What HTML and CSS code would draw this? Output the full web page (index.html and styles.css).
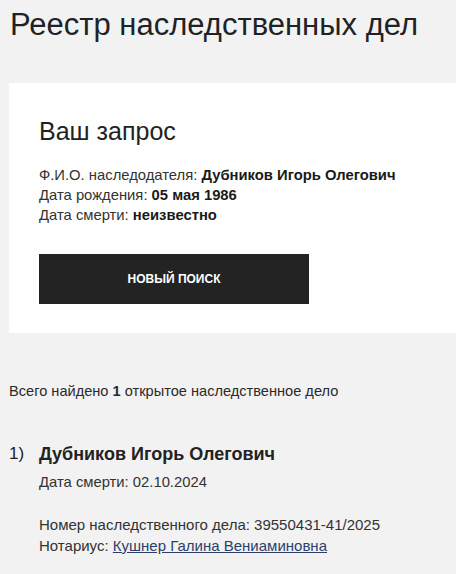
FILE: index.html
```html
<!DOCTYPE html>
<html lang="ru">
<head>
    <meta charset="UTF-8">
    <meta name="viewport" content="width=device-width, initial-scale=1.0">
    <title>Реестр наследственных дел</title>
    <link rel="stylesheet" href="styles.css">
</head>
<body>
    <div class="page">
        <h1 class="page-title">Реестр наследственных дел</h1>

        <!-- Карточка запроса -->
        <div class="request-card">
            <h2 class="request-title">Ваш запрос</h2>
            <div class="request-info">
                <div>Ф.И.О. наследодателя: <b>Дубников Игорь Олегович</b></div>
                <div>Дата рождения: <b>05 мая 1986</b></div>
                <div>Дата смерти: <b>неизвестно</b></div>
            </div>
            <a class="search-btn" href="#">Новый поиск</a>
        </div>

        <p class="found-text">Всего найдено <b>1</b> открытое наследственное дело</p>

        <!-- Список дел -->
        <div class="case-item">
            <div class="case-num">1)</div>
            <div class="case-body">
                <div class="case-name">Дубников Игорь Олегович</div>
                <div class="case-date">Дата смерти: 02.10.2024</div>
                <div class="case-details">
                    <div>Номер наследственного дела: 39550431-41/2025</div>
                    <div>Нотариус: <a class="notary-link" href="#">Кушнер Галина Вениаминовна</a></div>
                </div>
            </div>
        </div>
    </div>
</body>
</html>
```

FILE: styles.css
```css
body {
    font-family: 'Liberation Sans', Arial, sans-serif;
    margin: 0;
    padding: 0;
    background: #f2f2f2;
    color: #222;
    overflow: hidden;
}

.page {
    padding: 0 0 0 9px;
}

.page-title {
    font-size: 31px;
    font-weight: normal;
    margin: 0;
    padding: 6px 0 0 1px;
    line-height: 37px;
    color: #1f2226;
}

/* Карточка запроса */
.request-card {
    background: #fff;
    margin-top: 40px;
    padding: 33px 30px 30px;
    height: 187px;
}

.request-title {
    font-size: 25px;
    font-weight: normal;
    margin: 0 0 19px;
    line-height: 30px;
}

.request-info {
    font-size: 14.8px;
    line-height: 20px;
    color: #333;
}

.request-info b {
    color: #1a1a1a;
}

.search-btn {
    display: flex;
    justify-content: center;
    align-items: center;
    width: 270px;
    height: 50px;
    margin-top: 29px;
    background: #232323;
    color: #fff;
    font-size: 12px;
    font-weight: bold;
    text-transform: uppercase;
    text-decoration: none;
}

.found-text {
    font-size: 14.6px;
    margin: 48px 0 0;
    line-height: 20px;
    color: #2a2a2a;
}

/* Список дел */
.case-item {
    display: flex;
    margin-top: 41px;
}

.case-num {
    width: 30px;
    font-size: 17px;
    line-height: 24px;
}

.case-name {
    font-size: 18px;
    font-weight: bold;
    line-height: 24px;
}

.case-date {
    font-size: 14.8px;
    line-height: 20px;
    margin-top: 6px;
    color: #333;
}

.case-details {
    font-size: 15px;
    line-height: 21px;
    margin-top: 22px;
    color: #333;
}

.notary-link {
    color: #2c3f6b;
    text-decoration: underline;
}
```
